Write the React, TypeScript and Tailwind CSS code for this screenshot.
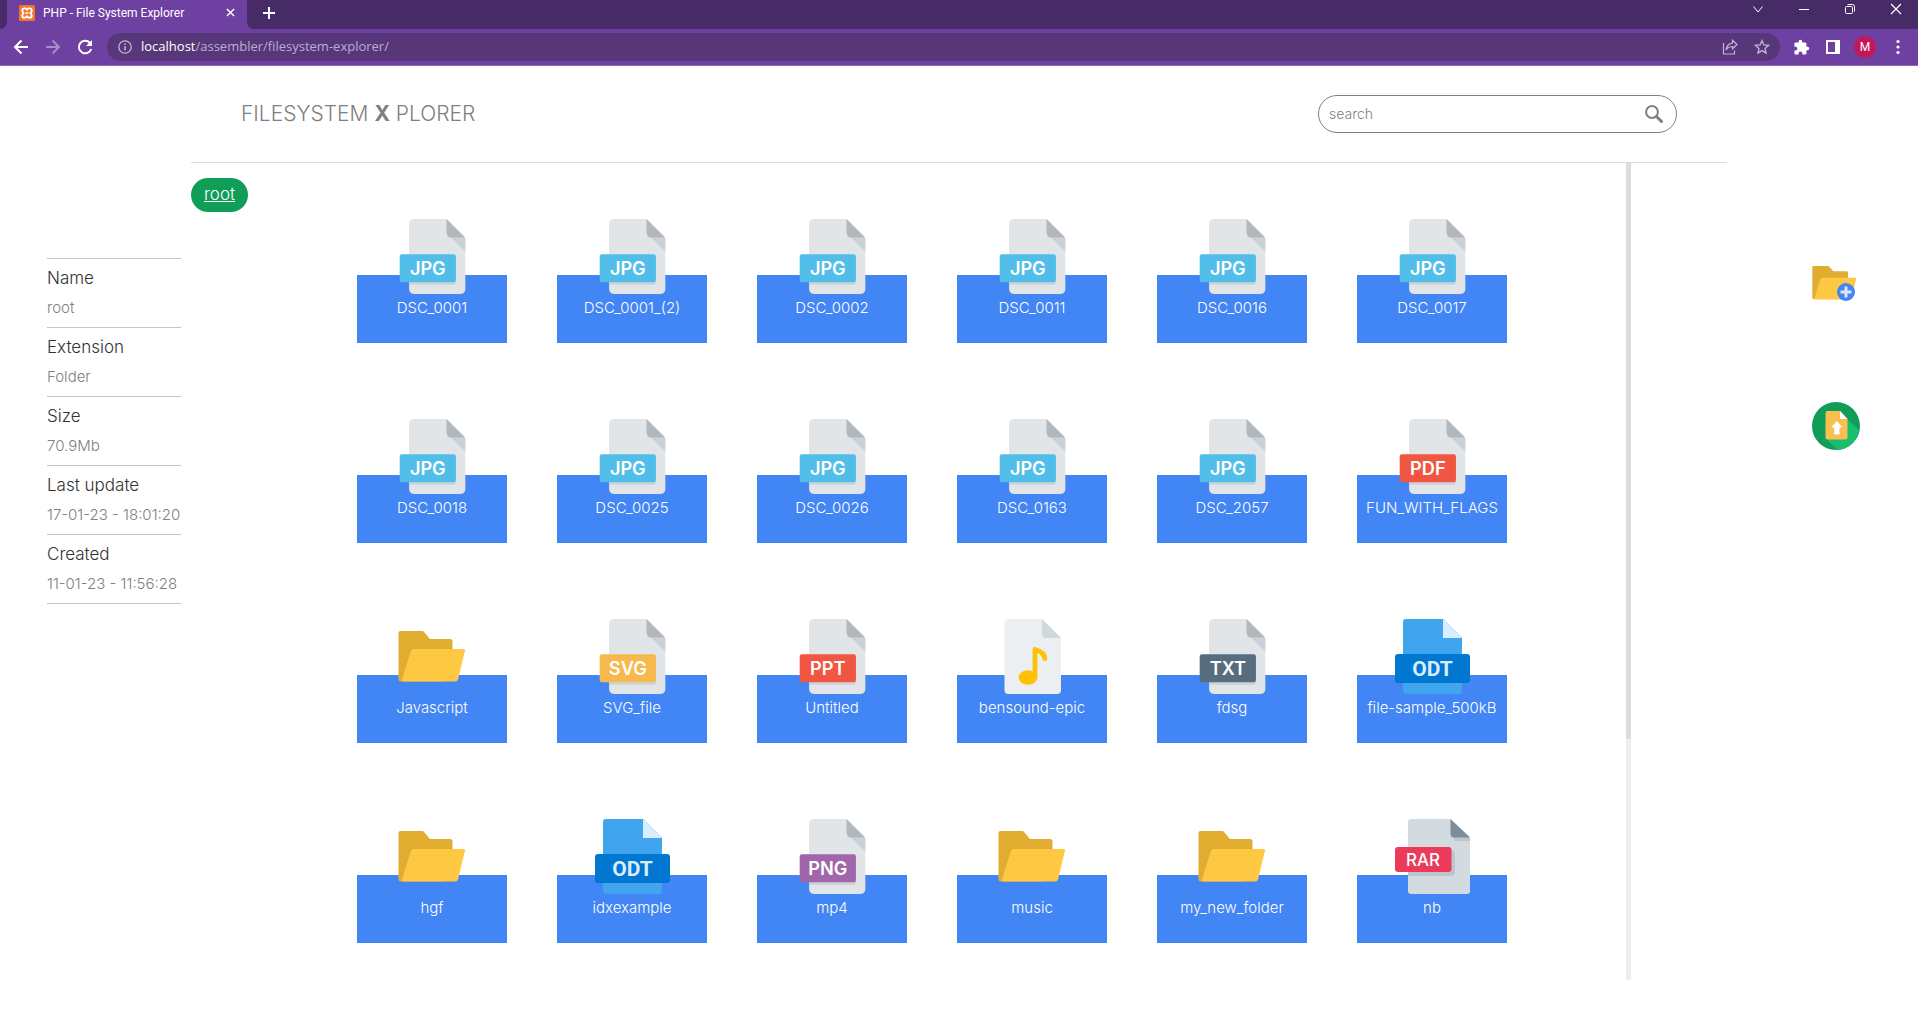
import React from "react";

type Kind = "JPG" | "PDF" | "SVG" | "PPT" | "TXT" | "PNG" | "folder" | "music" | "odt" | "rar";

const files: { name: string; kind: Kind }[] = [
  { name: "DSC_0001", kind: "JPG" },
  { name: "DSC_0001_(2)", kind: "JPG" },
  { name: "DSC_0002", kind: "JPG" },
  { name: "DSC_0011", kind: "JPG" },
  { name: "DSC_0016", kind: "JPG" },
  { name: "DSC_0017", kind: "JPG" },
  { name: "DSC_0018", kind: "JPG" },
  { name: "DSC_0025", kind: "JPG" },
  { name: "DSC_0026", kind: "JPG" },
  { name: "DSC_0163", kind: "JPG" },
  { name: "DSC_2057", kind: "JPG" },
  { name: "FUN_WITH_FLAGS", kind: "PDF" },
  { name: "Javascript", kind: "folder" },
  { name: "SVG_file", kind: "SVG" },
  { name: "Untitled", kind: "PPT" },
  { name: "bensound-epic", kind: "music" },
  { name: "fdsg", kind: "TXT" },
  { name: "file-sample_500kB", kind: "odt" },
  { name: "hgf", kind: "folder" },
  { name: "idxexample", kind: "odt" },
  { name: "mp4", kind: "PNG" },
  { name: "music", kind: "folder" },
  { name: "my_new_folder", kind: "folder" },
  { name: "nb", kind: "rar" },
];

const details = [
  ["Name", "root"],
  ["Extension", "Folder"],
  ["Size", "70.9Mb"],
  ["Last update", "17-01-23 - 18:01:20"],
  ["Created", "11-01-23 - 11:56:28"],
];

const tagColors: Record<string, string> = {
  JPG: "#50bee8",
  PDF: "#f15642",
  SVG: "#f7b84e",
  PPT: "#f15642",
  TXT: "#576d7e",
  PNG: "#a066aa",
};

function TaggedPage({ tag }: { tag: string }) {
  return (
    <svg viewBox="0 0 512 512" className="size-[75px]" aria-hidden="true">
      <path d="M128 0c-17.600 0-32 14.400-32 32v448c0 17.600 14.400 32 32 32h320c17.600 0 32-14.400 32-32V128L352 0H128z" fill="#e2e5e7" />
      <path d="M384 128h96L352 0v96c0 17.600 14.400 32 32 32z" fill="#b0b7bd" />
      <path d="M480 224l-96-96h96z" fill="#cad1d8" />
      <path d="M400 432H96v16h304c8.800 0 16-7.200 16-16v-16c0 8.800-7.200 16-16 16z" fill="#cad1d8" />
      <rect x="32" y="240" width="384" height="192" rx="16" fill={tagColors[tag]} />
      <text x="224" y="381" textAnchor="middle" fontSize="124" fontWeight="600" fill="#fff" fontFamily='Inter, "Open Sans", sans-serif'>
        {tag}
      </text>
    </svg>
  );
}

function FolderShape() {
  return (
    <>
      <path d="M3.500 60V14q0-2 2-2h22q1 0 1.500 1l6 7h20q2.500 0 2.500 2v24l-10 16.500H6q-2.500 0-2.500-2.500z" fill="#e0ad31" />
      <path d="M18.500 30H69q1.300 0 1 1.500L63 60.500q-.6 2-2.500 2H7.500q-1 0-.6-1.500l9-29q.7-2 2.600-2z" fill="#ffc843" />
    </>
  );
}

function FileIcon({ kind }: { kind: Kind }) {
  if (kind === "folder")
    return (
      <svg viewBox="0 0 75 75" className="size-[75px]" aria-hidden="true">
        <FolderShape />
      </svg>
    );
  if (kind === "music")
    return (
      <svg viewBox="0 0 75 75" className="size-[75px]" aria-hidden="true">
        <path d="M13.500 0H47l19 19v52q0 4-4 4H13.500q-4 0-4-4V4q0-4 4-4z" fill="#eceff1" />
        <path d="M47 0l19 19H51q-4 0-4-4z" fill="#cfd8dc" />
        <ellipse cx="33" cy="58.500" rx="9.400" ry="7.300" fill="#ffc107" />
        <path d="M37.600 30q0-2.400 2.400-2 12 3 12.400 12 0 2-2.400 2t-2.600-2.500Q46.500 36 42.400 34v25h-4.800z" fill="#ffc107" />
      </svg>
    );
  if (kind === "odt")
    return (
      <svg viewBox="0 0 75 75" className="size-[75px]" aria-hidden="true">
        <path d="M11 0h37l19 19v53q0 3-3 3H11q-3 0-3-3V3q0-3 3-3z" fill="#41a4ee" />
        <path d="M48 0l19 19H48z" fill="#d8eefe" />
        <rect y="35" width="75" height="29" rx="3" fill="#0077d0" />
        <text x="37.500" y="57" textAnchor="middle" fontSize="21" fontWeight="700" fill="#d8eefe" fontFamily='"Liberation Sans Narrow", Roboto, sans-serif'>
          ODT
        </text>
      </svg>
    );
  if (kind === "rar")
    return (
      <svg viewBox="0 0 75 75" className="size-[75px]" aria-hidden="true">
        <path d="M16 0h39.500L75 18.500V72q0 3-3 3H16q-3 0-3-3V3q0-3 3-3z" fill="#d3dbe1" />
        <path d="M58 17l17 1.500V22H62q-4 0-4-5z" fill="#bcc6ce" />
        <path d="M55.500 0L75 18.500H59q-3.500 0-3.500-3.500z" fill="#7e8d9a" />
        <path d="M13 53h43V31l1.500 0q2.500 1 2.500 4v18q0 4-4 4H13z" fill="#bcc6ce" />
        <rect y="28" width="56.500" height="25" rx="3" fill="#ec3a5b" />
        <text x="28" y="46.500" textAnchor="middle" fontSize="17" fontWeight="500" fill="#fff" fontFamily='Inter, "Open Sans", sans-serif'>
          RAR
        </text>
      </svg>
    );
  return <TaggedPage tag={kind} />;
}

function BrowserChrome() {
  return (
    <header className="bg-[#6e40a2] font-['Open_Sans',sans-serif] text-white">
      <div className="flex h-[29px] items-stretch bg-[#472b66]">
        <div className="flex w-[7px] bg-[#6e40a2]">
          <div className="flex-1 rounded-br-[7px] bg-[#472b66]" />
        </div>
        <div className="flex w-60 items-center gap-2 bg-[#6e40a2] pr-3 pb-1 pl-3">
          <svg viewBox="0 0 16 16" className="size-4" aria-hidden="true">
            <rect width="16" height="16" rx="1.500" fill="#f37623" />
            <path d="M5.200 3.400h1.400L8 4.800l1.400-1.400h1.400a1.900 1.900 0 0 1 1.900 1.900v.9L11.400 8l1.300 1.800v.9a1.900 1.900 0 0 1-1.900 1.900H9.400L8 11.200l-1.400 1.400H5.200a1.900 1.900 0 0 1-1.900-1.900v-.9L4.600 8 3.300 6.200v-.9a1.900 1.900 0 0 1 1.900-1.900z" fill="none" stroke="#fff" strokeWidth="1.900" strokeLinejoin="round" />
            <path d="M6.500 8h3" stroke="#fff" strokeWidth="1.600" />
          </svg>
          <span className="flex-1 font-['Roboto',sans-serif] text-xs whitespace-nowrap">PHP - File System Explorer</span>
          <button aria-label="Close tab">
            <svg viewBox="0 0 10 10" className="size-[9px]" fill="none" stroke="currentColor" strokeWidth="1.600">
              <path d="M1 1l8 8M9 1L1 9" />
            </svg>
          </button>
        </div>
        <div className="flex flex-1 items-stretch bg-[#6e40a2]">
          <div className="flex flex-1 items-stretch rounded-bl-[7px] bg-[#472b66]">
            <button aria-label="New tab" className="ml-4 pb-1">
              <svg viewBox="0 0 12 12" className="size-3" fill="none" stroke="currentColor" strokeWidth="2">
                <path d="M6 0v12M0 6h12" />
              </svg>
            </button>
            <div className="ml-auto flex items-start gap-8 pt-[2px] pr-[15px]">
              <button aria-label="Search tabs">
                <svg viewBox="0 0 14 14" className="size-[14px]" fill="none" stroke="currentColor">
                  <path d="M2.500 4.500L7 10l4.500-5.500" />
                </svg>
              </button>
              <button aria-label="Minimize">
                <svg viewBox="0 0 14 14" className="size-[14px]" fill="none" stroke="currentColor">
                  <path d="M2 7.500h10" />
                </svg>
              </button>
              <button aria-label="Restore">
                <svg viewBox="0 0 14 14" className="size-[14px]" fill="none" stroke="currentColor">
                  <rect x="2.500" y="4.500" width="7" height="7" rx="1" />
                  <path d="M4.500 2.500h5q2 0 2 2v5" />
                </svg>
              </button>
              <button aria-label="Close window">
                <svg viewBox="0 0 14 14" className="size-[14px]" fill="none" stroke="currentColor" strokeWidth="1.200">
                  <path d="M2 2l10 10M12 2L2 12" />
                </svg>
              </button>
            </div>
          </div>
        </div>
      </div>
      <div className="flex h-[37px] items-center border-b border-[#8b68b4] pr-3 pl-3">
        <div className="flex items-center gap-[14px]">
          <button aria-label="Back">
            <svg viewBox="0 0 18 18" className="size-[18px]" fill="none" stroke="currentColor" strokeWidth="2">
              <path d="M16 9H3M9.500 2.500L3 9l6.500 6.500" />
            </svg>
          </button>
          <button aria-label="Forward" className="text-[#a88cc8]">
            <svg viewBox="0 0 18 18" className="size-[18px]" fill="none" stroke="currentColor" strokeWidth="2">
              <path d="M2 9h13M8.500 2.500L15 9l-6.500 6.500" />
            </svg>
          </button>
          <button aria-label="Reload">
            <svg viewBox="0 0 18 18" className="size-[18px]" fill="none" stroke="currentColor" strokeWidth="2">
              <path d="M15.200 11a6.300 6.300 0 1 1-1.400-6.300" />
              <path d="M16 2v6h-6z" fill="currentColor" stroke="none" />
            </svg>
          </button>
        </div>
        <div className="ml-[13px] flex h-7 flex-1 items-center gap-2 rounded-full bg-[#573779] pr-[10px] pl-[11px]">
          <svg viewBox="0 0 14 14" className="size-[14px] text-[#c4b5d4]" fill="none" stroke="currentColor" strokeWidth="1.300" aria-hidden="true">
            <circle cx="7" cy="7" r="6.200" />
            <path d="M7 6.200v4M7 3.500v1.500" strokeWidth="1.600" />
          </svg>
          <p className="flex-1 pl-[1px] text-[13px] text-[#bcadcd]">
            <span className="text-white">localhost</span>/assembler/filesystem-explorer/
          </p>
          <button aria-label="Share" className="text-[#c4b5d4]">
            <svg viewBox="0 0 16 16" className="size-4" fill="none" stroke="currentColor" strokeWidth="1.200">
              <path d="M1.500 4v11h11v-3.500" />
              <path d="M10.500 1.200L15 5.500l-4.500 4.300V7.500Q6.500 7.500 4 11q.8-6 6.500-7.200z" />
            </svg>
          </button>
          <button aria-label="Bookmark" className="pl-2 text-[#c4b5d4]">
            <svg viewBox="0 0 16 16" className="size-4" fill="none" stroke="currentColor" strokeWidth="1.300">
              <path d="M8 1.500l1.900 4.400 4.700.4-3.600 3.100 1.100 4.700L8 11.600l-4.100 2.500L5 9.400 1.400 6.300l4.700-.4z" />
            </svg>
          </button>
        </div>
        <button aria-label="Extensions" className="ml-[13px]">
          <svg viewBox="0 0 24 24" className="size-[17px]" fill="currentColor">
            <path d="M20.500 11H19V7a2 2 0 0 0-2-2h-4V3.500a2.500 2.500 0 0 0-5 0V5H4a2 2 0 0 0-2 2v3.800h1.500a2.700 2.700 0 0 1 0 5.400H2V20a2 2 0 0 0 2 2h3.800v-1.500a2.700 2.700 0 0 1 5.400 0V22H17a2 2 0 0 0 2-2v-4h1.500a2.500 2.500 0 0 0 0-5z" />
          </svg>
        </button>
        <button aria-label="Side panel" className="ml-4">
          <svg viewBox="0 0 14 14" className="size-[14px]">
            <path d="M0 0h14v14H0zM2 2v10h7V2z" fill="currentColor" fillRule="evenodd" />
          </svg>
        </button>
        <button aria-label="Profile" className="ml-[14px] flex size-[22px] items-center justify-center rounded-full bg-[#c2185b] font-['Roboto',sans-serif] text-xs">
          M
        </button>
        <button aria-label="Menu" className="ml-[14px]">
          <svg viewBox="0 0 16 16" className="size-4" fill="currentColor">
            <circle cx="8" cy="2.500" r="1.600" />
            <circle cx="8" cy="8" r="1.600" />
            <circle cx="8" cy="13.500" r="1.600" />
          </svg>
        </button>
      </div>
    </header>
  );
}

export default function App() {
  return (
    <div className="min-h-screen bg-white font-['Inter',sans-serif] text-[#808080]">
      <BrowserChrome />
      <div className="flex">
        <aside className="w-[191px] shrink-0 pt-48 pr-[10px] pl-[47px]">
          <dl className="border-b border-[#c4c4c4]">
            {details.map(([label, value]) => (
              <div key={label} className="border-t border-[#c4c4c4] pt-[5px] pb-[5px] whitespace-nowrap">
                <dt className="text-[17px] leading-[29px] font-light text-[#333]">{label}</dt>
                <dd className="text-[15px] leading-[29px] font-light">{value}</dd>
              </div>
            ))}
          </dl>
        </aside>

        <main className="min-w-0 flex-1">
          <div className="flex h-[97px] items-center justify-between border-b border-[#dcdcdc] px-[50px]">
            <h1 className="text-[21px] font-light">
              FILESYSTEM <b className="font-bold">X</b> PLORER
            </h1>
            <form className="flex h-[38px] w-[359px] items-center rounded-full border border-[#808080] pr-[13px] pl-[10px]" role="search" onSubmit={(e) => e.preventDefault()}>
              <input aria-label="search" placeholder="search" className="min-w-0 flex-1 text-sm font-light outline-none placeholder:text-[#808080]" />
              <button aria-label="Submit search">
                <svg viewBox="0 0 18 18" className="size-[18px]" fill="none" stroke="currentColor">
                  <circle cx="7" cy="7" r="5.900" strokeWidth="2" />
                  <path d="M11.500 11.500l5 5" strokeWidth="3" strokeLinecap="round" />
                </svg>
              </button>
            </form>
          </div>

          <div className="flex w-[1440px] max-w-full items-stretch">
            <div className="flex-1 pt-[15px]">
              <nav aria-label="Breadcrumb" className="flex">
                <a href="#root" className="flex h-[34px] items-center rounded-full bg-[#109d58] px-[13px] text-[17px] font-light text-white underline">
                  root
                </a>
              </nav>
              <ul className="flex flex-wrap gap-x-[50px] gap-y-[132px] pt-[63px] pr-24 pb-[37px] pl-[166px]">
                {files.map((f) => (
                  <li key={f.name} className="flex h-[68px] w-[150px] flex-col items-center bg-[#4285f4]">
                    <div className="-mt-14">
                      <FileIcon kind={f.kind} />
                    </div>
                    <span className="pt-1 text-[15px] leading-5 font-light whitespace-nowrap text-white">{f.name}</span>
                  </li>
                ))}
              </ul>
            </div>
            <div className="w-[5px] shrink-0 bg-[#ededed]">
              <div className="h-[576px] bg-[#dddddd]" />
            </div>
          </div>
        </main>

        <aside className="flex w-[191px] shrink-0 flex-col items-end gap-[94px] pt-48 pr-[58px]">
          <button aria-label="New folder">
            <svg viewBox="0 0 50 50" className="size-[50px]">
              <g transform="scale(.66)">
                <FolderShape />
              </g>
              <circle cx="36" cy="34" r="9" fill="#4285f4" />
              <path d="M36 28.500v11M30.500 34h11" stroke="#dfe6f2" strokeWidth="3" />
            </svg>
          </button>
          <button aria-label="Upload file">
            <svg viewBox="0 0 48 48" className="size-12">
              <circle cx="24" cy="24" r="24" fill="#109d58" />
              <path d="M34.500 16L47 28A24 24 0 0 1 25.500 48L14 36.500z" fill="#19bd6b" />
              <path d="M15.500 9H28l7.500 8v18.500q0 2-2 2h-18q-2 0-2-2V11q0-2 2-2z" fill="#f9bf50" />
              <path d="M28 9l7.500 8H28z" fill="#fff" />
              <path d="M24.800 19l5.700 6.500h-3V32.500h-5.400v-7h-3z" fill="#fff" />
            </svg>
          </button>
        </aside>
      </div>
    </div>
  );
}
